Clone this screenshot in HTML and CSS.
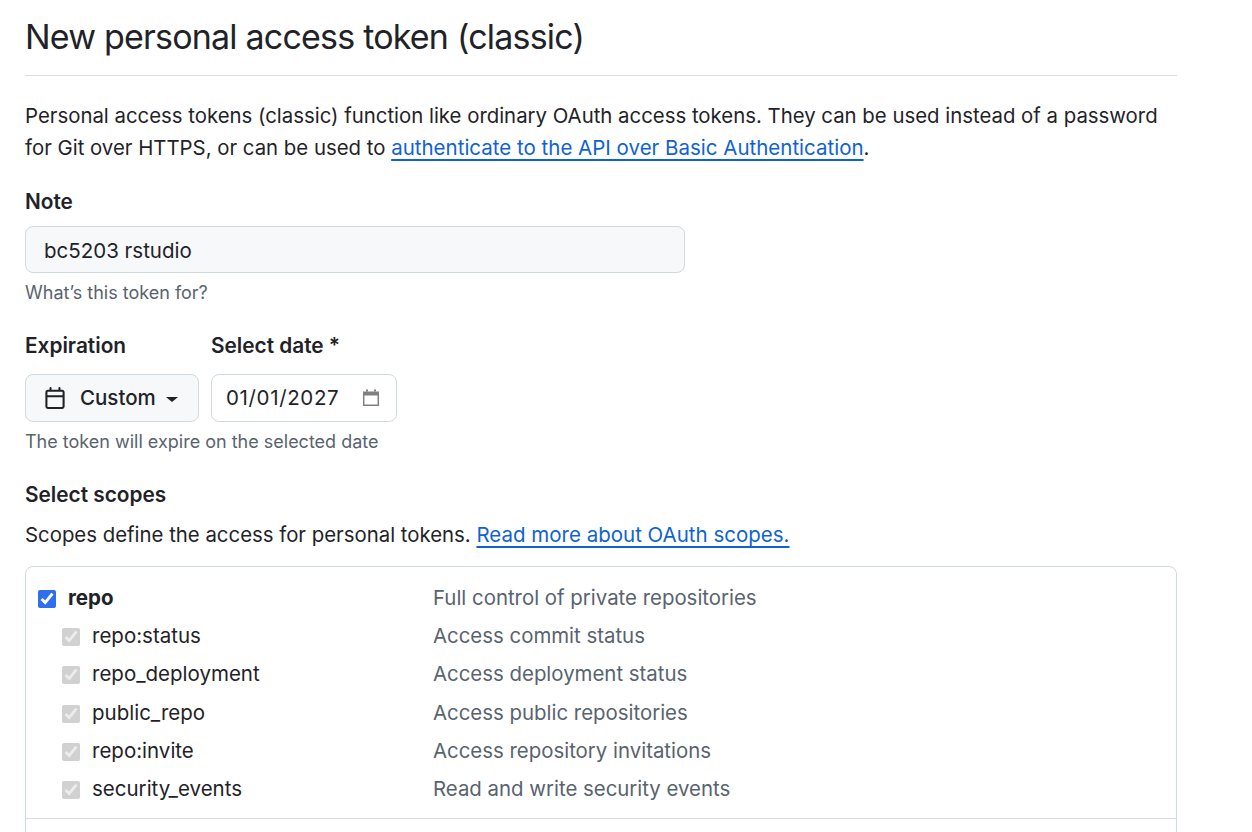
FILE: index.html
```html
<!DOCTYPE html>
<html lang="en">
<head>
    <meta charset="UTF-8">
    <title>New personal access token (classic)</title>
    <link rel="stylesheet" href="styles.css">
</head>
<body>
    <main class="page">
        <h1>New personal access token (classic)</h1>
        <p class="intro">Personal access tokens (classic) function like ordinary OAuth access tokens. They can be used instead of a password for Git over HTTPS, or can be used to <a href="#">authenticate to the API over Basic Authentication</a>.</p>

        <label class="label note-label" for="note">Note</label>
        <input class="note-input" id="note" type="text" value="bc5203 rstudio">
        <p class="hint">What’s this token for?</p>

        <div class="expiry">
            <div>
                <div class="label">Expiration</div>
                <button class="expiry-btn" type="button">
                    <svg width="22" height="22" viewBox="0 0 16 16" fill="#1f2328"><path d="M4.75 0a.75.75 0 0 1 .75.75V2h5V.75a.75.75 0 0 1 1.5 0V2h1.25c.966 0 1.75.784 1.75 1.75v10.5A1.75 1.75 0 0 1 13.25 16H2.75A1.75 1.75 0 0 1 1 14.25V3.75C1 2.784 1.784 2 2.75 2H4V.75A.75.75 0 0 1 4.75 0ZM2.5 7.5v6.75c0 .138.112.25.25.25h10.5a.25.25 0 0 0 .25-.25V7.5Zm10.75-4H2.75a.25.25 0 0 0-.25.25V6h11V3.75a.25.25 0 0 0-.25-.25Z"/></svg>
                    <span>Custom</span>
                    <i class="caret"></i>
                </button>
            </div>
            <div>
                <div class="label">Select date *</div>
                <div class="date-box">
                    <span>01/01/2027</span>
                    <svg width="18" height="18" viewBox="0 0 18 18" fill="none"><path d="M1.7 5h14.6v11.3H1.7z" stroke="#808080" stroke-width="1.5"/><path d="M1 2.5h16v4H1z" fill="#808080"/><path d="M4 .5h2v2H4zM12 .5h2v2h-2z" fill="#808080"/></svg>
                </div>
            </div>
        </div>
        <p class="hint">The token will expire on the selected date</p>

        <div class="label scopes-label">Select scopes</div>
        <p class="scopes-text">Scopes define the access for personal tokens. <a href="#">Read more about OAuth scopes.</a></p>

        <div class="scopes">
            <div class="scope-group">
                <div class="scope scope-main">
                    <span class="name"><input type="checkbox" checked><b>repo</b></span>
                    <span class="desc">Full control of private repositories</span>
                </div>
                <div class="scope scope-sub">
                    <span class="name"><input type="checkbox" checked disabled>repo:status</span>
                    <span class="desc">Access commit status</span>
                </div>
                <div class="scope scope-sub">
                    <span class="name"><input type="checkbox" checked disabled>repo_deployment</span>
                    <span class="desc">Access deployment status</span>
                </div>
                <div class="scope scope-sub">
                    <span class="name"><input type="checkbox" checked disabled>public_repo</span>
                    <span class="desc">Access public repositories</span>
                </div>
                <div class="scope scope-sub">
                    <span class="name"><input type="checkbox" checked disabled>repo:invite</span>
                    <span class="desc">Access repository invitations</span>
                </div>
                <div class="scope scope-sub">
                    <span class="name"><input type="checkbox" checked disabled>security_events</span>
                    <span class="desc">Read and write security events</span>
                </div>
            </div>
        </div>
    </main>
</body>
</html>
```

FILE: styles.css
```css
html, body {
    height: 832px;
    overflow: hidden;
}

body {
    margin: 0;
    font-family: Inter, "Liberation Sans", sans-serif;
    font-size: 20.5px;
    line-height: 32px;
    color: #1f2328;
    background-color: #fff;
}

.page {
    width: 1152px;
    margin-left: 25px;
}

h1 {
    margin: 0;
    padding: 12px 0 13px;
    font-size: 34px;
    letter-spacing: -0.8px;
    line-height: 50px;
    font-weight: 400;
    border-bottom: 1px solid #d8dee4;
}

a {
    color: #0f62d6;
    font-size: 20.5px;
    text-decoration: underline;
    text-underline-offset: 4px;
}

.intro {
    margin: 24px 0 0;
    font-size: 20.36px;
}

.label {
    display: block;
    font-size: 20.8px;
    font-weight: 600;
    line-height: 28px;
}

.note-label {
    margin-top: 24px;
}

.note-input {
    display: block;
    box-sizing: border-box;
    width: 660px;
    height: 47px;
    margin-top: 10px;
    padding: 2px 18px 0;
    font: inherit;
    color: #1f2328;
    background-color: #f6f8fa;
    border: 1px solid #d1d9e0;
    border-radius: 8px;
}

.hint {
    margin: 6px 0 0;
    font-size: 18px;
    line-height: 28px;
    color: #59636e;
}

.expiry {
    display: flex;
    gap: 12px;
    margin-top: 25px;
}

.expiry .label {
    margin-bottom: 14px;
}

.expiry-btn {
    display: flex;
    align-items: center;
    box-sizing: border-box;
    width: 174px;
    height: 48px;
    padding: 0 18px;
    font: inherit;
    font-weight: 500;
    color: #1f2328;
    background-color: #f6f8fa;
    border: 1px solid #d1d9e0;
    border-radius: 8px;
}

.expiry-btn span {
    margin-left: 14px;
}

.caret {
    margin-left: 10px;
    margin-top: 3px;
    border-top: 5px solid #1f2328;
    border-left: 6px solid transparent;
    border-right: 6px solid transparent;
}

.date-box {
    display: flex;
    align-items: center;
    justify-content: space-between;
    box-sizing: border-box;
    width: 186px;
    height: 48px;
    padding: 0 16px 0 14px;
    letter-spacing: 0.65px;
    border: 1px solid #d1d9e0;
    border-radius: 8px;
}

.scopes-label {
    margin-top: 25px;
}

.scopes-text {
    margin: 10px 0 0;
    font-size: 20.36px;
}

.scopes {
    box-sizing: border-box;
    height: 300px;
    margin-top: 15px;
    border: 1px solid #d1d9e0;
    border-radius: 8px;
}

.scope-group {
    padding: 12px 12px 10px;
    border-bottom: 1px solid #d8dee4;
}

.scope {
    display: flex;
    height: 38.2px;
    align-items: center;
}

.name {
    display: flex;
    align-items: center;
    width: 395px;
    flex-shrink: 0;
}

.scope-sub .name {
    padding-left: 24px;
    width: 371px;
}

.name input {
    width: 18px;
    height: 18px;
    margin: 2px 12px 0 0;
    accent-color: #2f6fed;
}

.desc {
    font-size: 20.4px;
    color: #59636e;
}
```
